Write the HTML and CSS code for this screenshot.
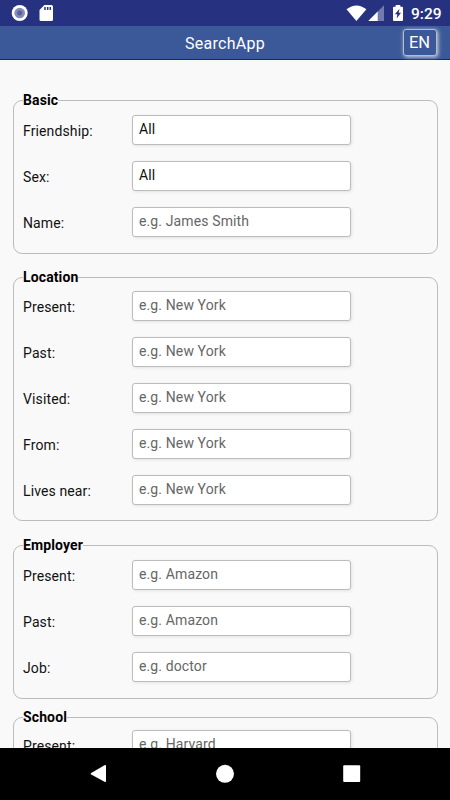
FILE: index.html
```html
<!DOCTYPE html>
<html lang="en">
<head>
<meta charset="utf-8">
<meta name="viewport" content="width=device-width">
<title>SearchApp</title>
<link rel="stylesheet" href="styles.css">
</head>
<body>
<div class="screen">
  <div class="status">
    <svg class="status-left" width="60" height="26" viewBox="0 0 60 26">
      <circle cx="19.7" cy="13" r="8" fill="#fff"/>
      <circle cx="19.7" cy="13" r="5.3" fill="#858abb"/>
      <circle cx="19.7" cy="13" r="2.5" fill="#596099"/>
      <path d="M44.4 5H51.5Q53 5 53 6.5V19.5Q53 21 51.5 21H41Q39.5 21 39.5 19.5V10Z" fill="#fff"/>
      <path d="M45 7v3M47.7 7v3M50.3 7v3" stroke="#263180" stroke-width="1.5"/>
    </svg>
    <svg class="status-right" width="60" height="26" viewBox="346 0 60 26">
      <path d="M346.5 9.3Q356.5 1.6 366.4 9.3L356.4 21Z" fill="#fff"/>
      <path d="M384 5.2V21H368.3Z" fill="#737aae"/>
      <path d="M377.7 11.5V21H368.3Z" fill="#fff"/>
      <path d="M395.7 5H400.3V6.7H402Q403 6.7 403 7.7V20Q403 21 402 21H394Q393 21 393 20V7.7Q393 6.7 394 6.7H395.7Z" fill="#fff"/>
      <path d="M399.5 8.7L394.9 14.3H397.3L396.7 18.5L401 12.8H398.7Z" fill="#263180"/>
    </svg>
    <span class="clock">9:29</span>
  </div>
  <header class="bar">
    <span class="title">SearchApp</span>
    <button class="lang">EN</button>
  </header>
  <main class="content">
    <section class="group basic">
      <h2>Basic</h2>
      <div class="row"><label>Friendship:</label><div class="field chosen">All</div></div>
      <div class="row"><label>Sex:</label><div class="field chosen">All</div></div>
      <div class="row"><label>Name:</label><div class="field">e.g. James Smith</div></div>
    </section>
    <section class="group location">
      <h2>Location</h2>
      <div class="row"><label>Present:</label><div class="field">e.g. New York</div></div>
      <div class="row"><label>Past:</label><div class="field">e.g. New York</div></div>
      <div class="row"><label>Visited:</label><div class="field">e.g. New York</div></div>
      <div class="row"><label>From:</label><div class="field">e.g. New York</div></div>
      <div class="row"><label>Lives near:</label><div class="field">e.g. New York</div></div>
    </section>
    <section class="group employer">
      <h2>Employer</h2>
      <div class="row"><label>Present:</label><div class="field">e.g. Amazon</div></div>
      <div class="row"><label>Past:</label><div class="field">e.g. Amazon</div></div>
      <div class="row"><label>Job:</label><div class="field">e.g. doctor</div></div>
    </section>
    <section class="group school">
      <h2>School</h2>
      <div class="row"><label>Present:</label><div class="field">e.g. Harvard</div></div>
    </section>
  </main>
  <nav class="nav">
    <svg width="450" height="52" viewBox="0 748 450 52" fill="#fff">
      <path d="M91.2 773L104.5 765.2Q106 764.5 106 766V781Q106 782.6 104.5 781.8L91.2 774.5Q90 773.8 91.2 773Z"/>
      <circle cx="225" cy="773.8" r="9"/>
      <rect x="343.2" y="765.3" width="17" height="16.7" rx="1"/>
    </svg>
  </nav>
</div>
</body>
</html>
```
FILE: styles.css
```css
* { box-sizing: border-box; }
body { margin: 0; font-family: Roboto, "Liberation Sans", sans-serif; }
.screen {
  width: 450px;
  height: 800px;
  display: flex;
  flex-direction: column;
  overflow: hidden;
  background: #f9f9f9;
}
.status {
  flex: none;
  height: 26px;
  display: flex;
  background: #263180;
  color: #fff;
}
.status svg { display: block; }
.status-right { margin-left: 286px; }
.clock {
  margin-left: 5px;
  font-size: 15.5px;
  font-weight: 500;
  line-height: 28px;
}
.bar {
  flex: none;
  height: 34px;
  display: grid;
  grid-template-columns: 1fr auto 1fr;
  background: #3b5998;
  border-bottom: 1px solid #08297d;
  color: #fff;
}
.title {
  grid-column: 2;
  font-size: 16px;
  line-height: 36px;
  letter-spacing: 0.25px;
}
.lang {
  justify-self: end;
  margin: 3px 13px 0 0;
  width: 34px;
  height: 27px;
  padding: 0 1px 0 0;
  border: 1px solid #b5bdcc;
  border-radius: 3px;
  background: #3b5998;
  box-shadow: 1px 1px 4px #d5dbe6;
  color: #fff;
  font: 16.5px/24px Roboto, sans-serif;
}
.content {
  flex: 1;
  min-height: 0;
  overflow: hidden;
  padding: 40px 12px 0 13px;
}
.group {
  border: 1px solid #bcbcbc;
  border-radius: 9px;
  padding: 0 9px;
  margin-bottom: 24px;
}
.basic { height: 154px; margin-bottom: 23px; }
.location { height: 244px; }
.employer { height: 154px; margin-bottom: 18px; }
.school { height: 154px; }
.group h2 {
  width: max-content;
  height: 16px;
  margin: -9px 0 7px;
  background: #f9f9f9;
  color: #000;
  font-size: 14px;
  font-weight: 700;
  line-height: 16px;
  letter-spacing: 0.12px;
}
.location h2 { margin-bottom: 6px; }
.school h2 { margin-bottom: 5px; }
.row {
  height: 46px;
  display: grid;
  grid-template-columns: 109px 219px;
  align-items: start;
}
.row label {
  font-size: 14px;
  line-height: 33px;
  letter-spacing: 0.12px;
  color: #111;
}
.field {
  height: 30px;
  border: 1px solid #bcbcbc;
  border-radius: 3px;
  background: #fff;
  box-shadow: 1px 1px 3px #e2e2e2;
  padding-left: 6px;
  font-size: 14px;
  line-height: 26px;
  letter-spacing: 0.12px;
  color: #666;
}
.chosen { color: #111; }
.nav { flex: none; height: 52px; background: #000; }
.nav svg { display: block; }
```
